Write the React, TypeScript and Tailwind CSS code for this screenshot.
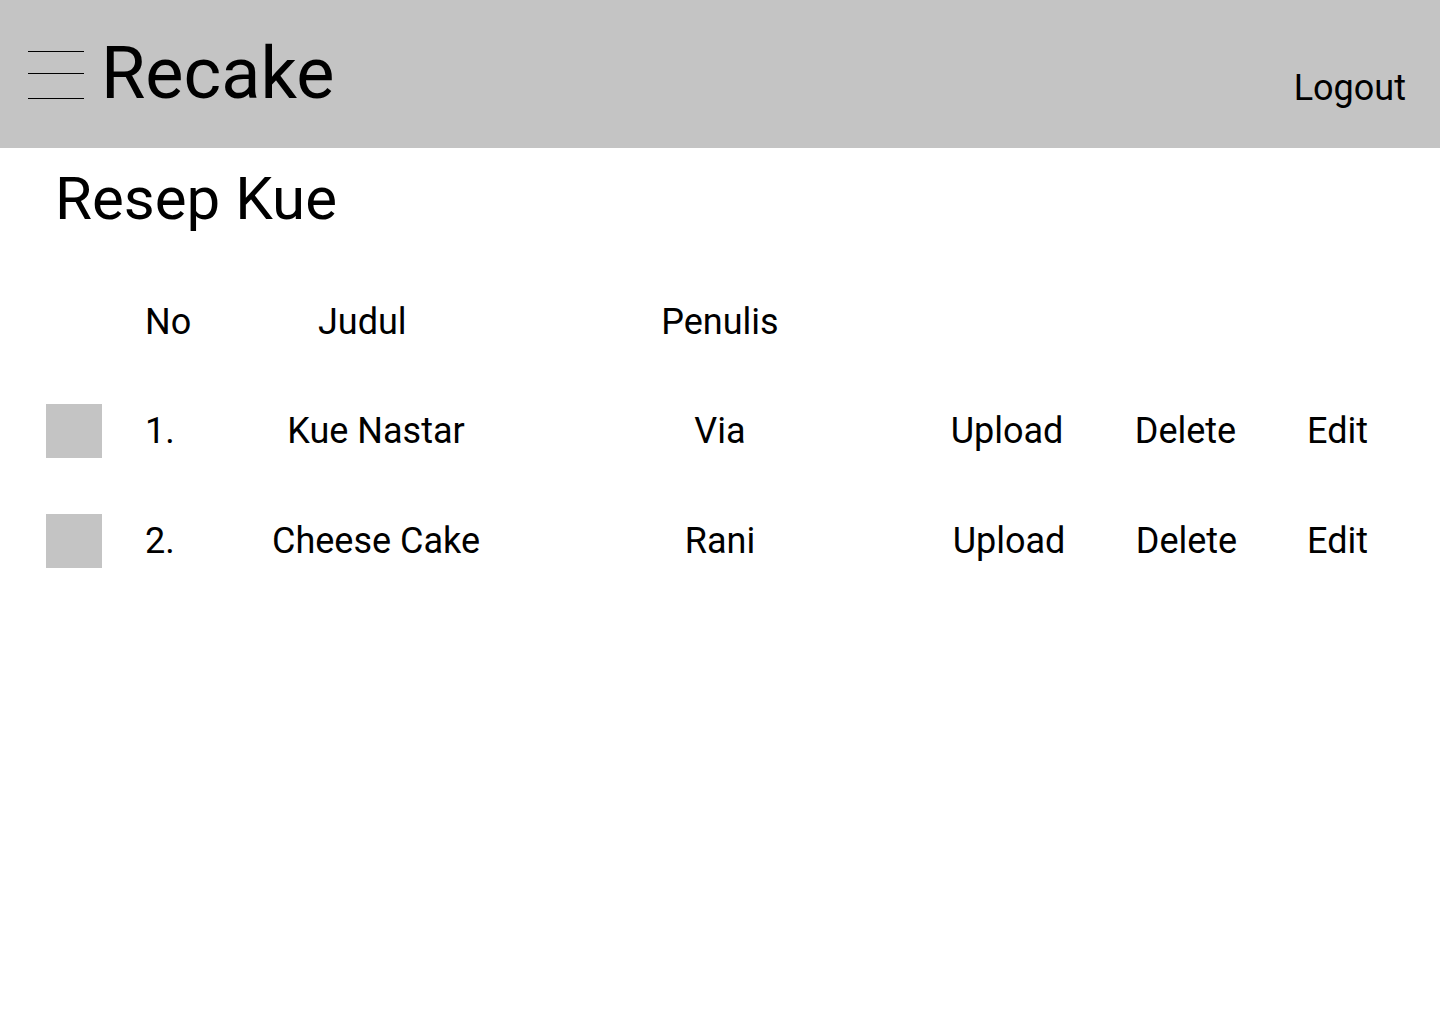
import React from "react";

const rows = [
  { no: "1.", judul: "Kue Nastar", penulis: "Via", up: "w-[160px]", del: "w-[197px]" },
  { no: "2.", judul: "Cheese Cake", penulis: "Rani", up: "ml-[2px] w-[160px]", del: "w-[195px]" },
];

export default function App() {
  return (
    <div className="w-[1440px] h-[1024px] bg-white text-black font-['Roboto',sans-serif]">
      <header className="h-[148px] bg-[#c4c4c4] flex items-start">
        <div className="ml-[28px] mt-[51px] w-[56px] flex flex-col">
          <div className="h-px bg-black" />
          <div className="h-px bg-black mt-[21px]" />
          <div className="h-px bg-black mt-[24px]" />
        </div>
        <div className="ml-[17px] mt-[38px] text-[72px] leading-none">Recake</div>
        <div className="ml-auto mr-[34px] mt-[70px] text-[36px] leading-none">Logout</div>
      </header>
      <h1 className="ml-[55px] mt-[21px] text-[60px] leading-[60px]">Resep Kue</h1>
      <div className="mt-[66px] pl-[46px] flex items-center h-[54px] text-[36px]">
        <div className="w-[56px]" />
        <div className="ml-[43px] w-[173px]">No</div>
        <div className="w-[302px]">Judul</div>
        <div className="w-[200px] text-center">Penulis</div>
      </div>
      {rows.map((r, i) => (
        <div
          key={r.no}
          className={`${i === 0 ? "mt-[55px]" : "mt-[56px]"} pl-[46px] flex items-center h-[54px] text-[36px] whitespace-nowrap`}
        >
          <div className="w-[56px] h-[54px] bg-[#c4c4c4]" />
          <div className="ml-[43px] w-[121px]">{r.no}</div>
          <div className="w-[220px] text-center">{r.judul}</div>
          <div className="w-[134px]" />
          <div className="w-[200px] text-center">{r.penulis}</div>
          <div className="w-[107px]" />
          <div className={`text-center ${r.up}`}>Upload</div>
          <div className={`text-center ${r.del}`}>Delete</div>
          <div className="w-[107px] text-center">Edit</div>
        </div>
      ))}
    </div>
  );
}
